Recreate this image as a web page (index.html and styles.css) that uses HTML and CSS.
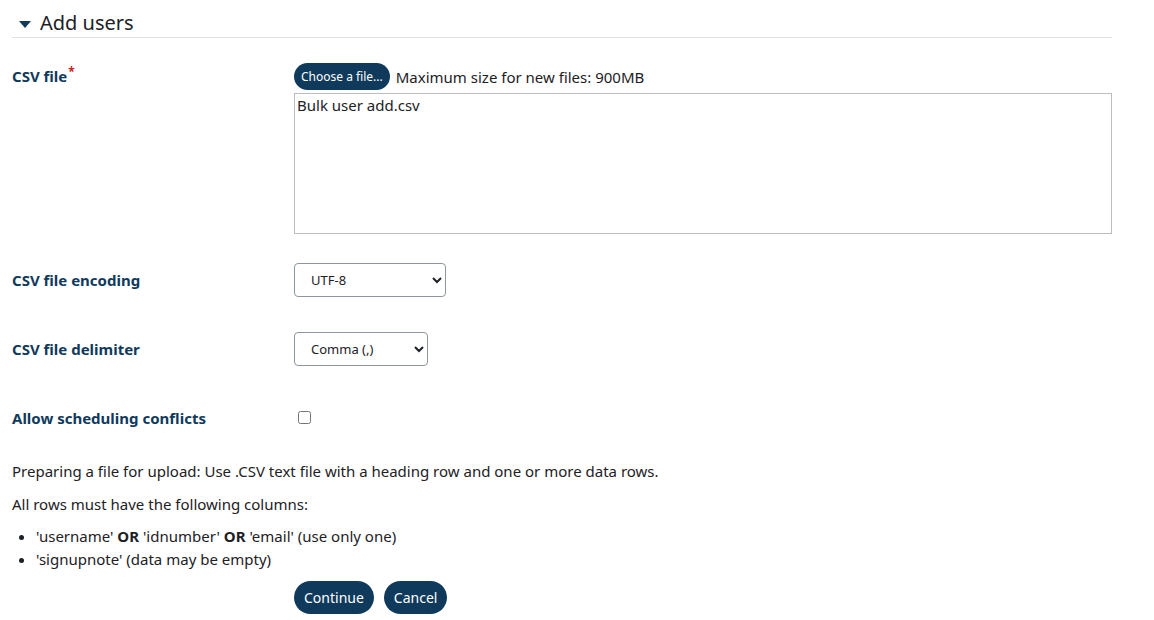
FILE: index.html
```html
<!DOCTYPE html>
<html lang="en">
<head>
    <meta charset="UTF-8">
    <meta name="viewport" content="width=device-width, initial-scale=1.0">
    <title>Add users</title>
    <link rel="stylesheet" href="styles.css">
</head>
<body>

    <div class="container">
        <!-- 折りたたみ見出し -->
        <h3 class="section-title">
            <span class="caret"></span>
            Add users
        </h3>

        <form class="upload-form" onsubmit="return false;">
            <div class="form-row form-row-file">
                <label class="form-label">CSV file<span class="required">*</span></label>
                <div class="form-field">
                    <div class="file-picker">
                        <button type="button" class="btn btn-small">Choose a file...</button>
                        <span class="max-size">Maximum size for new files: 900MB</span>
                    </div>
                    <div class="file-box">Bulk user add.csv</div>
                </div>
            </div>

            <div class="form-row form-row-encoding">
                <label class="form-label" for="encoding">CSV file encoding</label>
                <div class="form-field">
                    <select id="encoding" class="select select-encoding">
                        <option>UTF-8</option>
                        <option>ISO-8859-1</option>
                    </select>
                </div>
            </div>

            <div class="form-row form-row-delimiter">
                <label class="form-label" for="delimiter">CSV file delimiter</label>
                <div class="form-field">
                    <select id="delimiter" class="select select-delimiter">
                        <option>Comma (,)</option>
                        <option>Semicolon (;)</option>
                        <option>Tab</option>
                    </select>
                </div>
            </div>

            <div class="form-row form-row-check">
                <label class="form-label" for="conflicts">Allow scheduling conflicts</label>
                <div class="form-field">
                    <input type="checkbox" id="conflicts" class="checkbox">
                </div>
            </div>

            <div class="help-text">
                <p>Preparing a file for upload: Use .CSV text file with a heading row and one or more data rows.</p>
                <p>All rows must have the following columns:</p>
                <ul>
                    <li>'username' <b>OR</b> 'idnumber' <b>OR</b> 'email' (use only one)</li>
                    <li>'signupnote' (data may be empty)</li>
                </ul>
            </div>

            <div class="form-actions">
                <button type="submit" class="btn">Continue</button>
                <button type="button" class="btn">Cancel</button>
            </div>
        </form>
    </div>

</body>
</html>
```

FILE: styles.css
```css
body {
    font-family: "Noto Sans", "Open Sans", sans-serif;
    font-size: 15px;
    line-height: 22px;
    background-color: #fff;
    margin: 0;
    padding: 0;
    color: #1d2125;
}

.container {
    width: 1100px;
    padding: 9px 0 0 12px;
}

.section-title {
    display: flex;
    align-items: center;
    margin: 0;
    font-size: 20px;
    font-weight: normal;
    color: #1d2125;
    border-bottom: 1px solid #dee2e6;
    height: 28px;
}

.caret {
    width: 0;
    height: 0;
    border-left: 6px solid transparent;
    border-right: 6px solid transparent;
    border-top: 7px solid #0f3a5c;
    margin: 2px 9px 0 7px;
}

.form-row {
    display: grid;
    grid-template-columns: 282px 1fr;
    align-items: center;
}

.form-row-file {
    align-items: start;
    margin-top: 25px;
}

.form-row-file .form-label {
    line-height: 27px;
}

.form-label {
    font-weight: bold;
    color: #0f3a5c;
    font-size: 15px;
}

.required {
    color: #c91f1f;
    font-size: 12px;
    line-height: 0;
    vertical-align: 6px;
    margin-left: 1px;
}

.file-picker {
    display: flex;
    align-items: center;
    gap: 6px;
}

.btn {
    background-color: #0f3a5c;
    color: #fff;
    border: none;
    border-radius: 17px;
    font-family: inherit;
    font-size: 14px;
    padding: 0 10px;
    height: 33px;
    cursor: pointer;
}

.btn-small {
    font-size: 12px;
    height: 27px;
    padding: 0 7px;
    border-radius: 14px;
}

.file-box {
    box-sizing: border-box;
    margin-top: 3px;
    height: 141px;
    border: 1px solid #bdbdbd;
    padding: 0 2px;
    font-size: 15px;
}

.select {
    height: 34px;
    border: 1px solid #8f959e;
    border-radius: 4px;
    background-color: #fff;
    font-family: inherit;
    font-size: 13px;
    color: #1d2125;
    padding: 0 10px 0 12px;
}

.select-encoding {
    width: 152px;
}

.select-delimiter {
    width: 134px;
}

.form-row-encoding {
    margin-top: 29px;
}

.form-row-delimiter {
    margin-top: 35px;
}

.form-row-check {
    align-items: start;
    margin-top: 41px;
}

.checkbox {
    width: 13px;
    height: 13px;
    margin: 1px 0 0 4px;
}

.help-text {
    margin-top: 31px;
}

.help-text p {
    margin: 0 0 11px;
}

.help-text p + p {
    margin-bottom: 10px;
}

ul {
    margin: 0;
    padding-left: 24px;
}

li {
    line-height: 23px;
}

.form-actions {
    display: flex;
    gap: 10px;
    margin: 10px 0 0 282px;
}
```
